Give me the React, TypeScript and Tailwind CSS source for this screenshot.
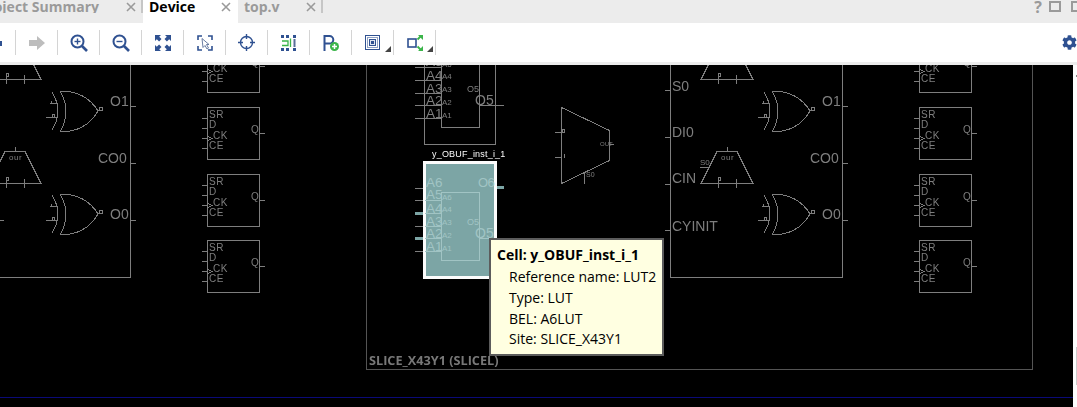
import { FaCog } from "react-icons/fa";

const blue = "#2f5191";
const wire = "#808080";

function CloseX() {
	return (
		<svg width="10" height="10" viewBox="0 0 10 10" className="shrink-0">
			<path d="M1 1L9 9M9 1L1 9" stroke="#9a9a9a" strokeWidth="1.6" />
		</svg>
	);
}

function ZoomIcon({ plus }: { plus?: boolean }) {
	return (
		<svg width="18" height="18" viewBox="0 0 18 18">
			<circle cx="7.5" cy="7.5" r="6" fill="none" stroke={blue} strokeWidth="2" />
			<path d="M12 12L17 17" stroke={blue} strokeWidth="2.6" />
			<path d="M4.5 7.5H10.5" stroke={blue} strokeWidth="1.4" />
			{plus && <path d="M7.5 4.5V10.5" stroke={blue} strokeWidth="1.4" />}
		</svg>
	);
}

function FitIcon() {
	return (
		<svg width="16" height="16" viewBox="0 0 16 16" fill={blue}>
			<path d="M0 0H6L4.2 1.8L6.5 4.1L4.1 6.5L1.8 4.2L0 6Z" />
			<path d="M16 0H10L11.8 1.8L9.5 4.1L11.9 6.5L14.2 4.2L16 6Z" />
			<path d="M0 16H6L4.2 14.2L6.5 11.9L4.1 9.5L1.8 11.8L0 10Z" />
			<path d="M16 16H10L11.8 14.2L9.5 11.9L11.9 9.5L14.2 11.8L16 10Z" />
		</svg>
	);
}

function SelectIcon() {
	return (
		<svg width="16" height="16" viewBox="0 0 16 16" fill="none">
			<path d="M1 5V1H5M11 1H15V5M15 11V15H11M5 15H1V11" stroke={blue} strokeWidth="1.6" />
			<path d="M5 3.5L12 9.5H9.5L11.5 13L10 14L8 10.5L6 12.5Z" fill="#fff" stroke="#5a6f99" strokeWidth="0.9" />
		</svg>
	);
}

function TargetIcon() {
	return (
		<svg width="17" height="17" viewBox="0 0 17 17" fill="none" stroke={blue}>
			<circle cx="8.5" cy="8.5" r="6" strokeWidth="1.4" />
			<path d="M8.5 0V5M8.5 12V17M0 8.5H5M12 8.5H17" strokeWidth="1.4" />
		</svg>
	);
}

function RouteIcon() {
	return (
		<svg width="15" height="16" viewBox="0 0 15 16">
			<g fill={blue}>
				<rect x="0" y="0" width="3" height="3" />
				<rect x="5" y="0" width="3" height="3" />
				<rect x="12" y="0" width="3" height="3" />
				<rect x="0" y="13" width="3" height="3" />
				<rect x="5" y="13" width="3" height="3" />
				<rect x="12" y="13" width="3" height="3" />
			</g>
			<rect x="12.5" y="4" width="2" height="8" fill="#5a6f99" />
			<path d="M1 6H7V10.5H1M9.5 3.5V12" fill="none" stroke="#3bb54a" strokeWidth="1.3" />
		</svg>
	);
}

function PlusPIcon() {
	return (
		<svg width="16" height="16" viewBox="0 0 16 16">
			<path d="M1.5 16V1H6.5A3.8 3.8 0 0 1 6.5 8.6H1.5" fill="none" stroke={blue} strokeWidth="2" />
			<circle cx="11.5" cy="11.5" r="4.5" fill="#3bb54a" />
			<path d="M9 11.5H14M11.5 9V14" stroke="#fff" strokeWidth="1.5" />
		</svg>
	);
}

function CornerMark() {
	return <span className="absolute right-[2px] bottom-[3px] h-0 w-0 border-b-[6px] border-l-[6px] border-b-[#444444] border-l-transparent" />;
}

function SquaresIcon() {
	return (
		<svg width="15" height="15" viewBox="0 0 15 15" fill="none">
			<rect x="0.5" y="0.5" width="14" height="14" stroke={blue} />
			<rect x="2.5" y="2.5" width="10" height="10" stroke="#8ea1c4" />
			<rect x="4.5" y="4.5" width="6" height="6" stroke={blue} fill="#dfe5f0" />
			<rect x="6" y="6" width="3" height="3" fill={blue} />
		</svg>
	);
}

function ExpandIcon() {
	return (
		<svg width="16" height="16" viewBox="0 0 16 16" fill="none">
			<rect x="1" y="4" width="8" height="8" stroke={blue} strokeWidth="1.6" />
			<path d="M10.5 4.5L14 1M10.5 11.5L14 15" stroke="#3bb54a" strokeWidth="1.8" />
			<path d="M11 0H16V5ZM11 16H16V11Z" fill="#3bb54a" />
		</svg>
	);
}

function ToolButton({ children, corner }: { children?: React.ReactNode; corner?: boolean }) {
	return (
		<div className="relative flex h-[25px] w-[42px] shrink-0 items-center justify-center border-r border-[#d4d4d4]">
			{children}
			{corner && <CornerMark />}
		</div>
	);
}

function T({ x, y, s = 10, ls = 0, children, fill = wire }: { x: number; y: number; s?: number; ls?: number; children: React.ReactNode; fill?: string }) {
	return (
		<text x={x} y={y} fontSize={s} letterSpacing={ls} fill={fill}>
			{children}
		</text>
	);
}

function Ff({ x, y }: { x: number; y: number }) {
	return (
		<g transform={`translate(${x} ${y})`}>
			<rect x="0.5" y="0.5" width="52" height="52" fill="none" stroke={wire} />
			<path d="M-5 11.5H0M-5 21.5H0M-5 31.5H0M-5 41.5H0M52 26.5H58M0 29L5 31.5L0 34" fill="none" stroke={wire} />
			<T x={2} y={11} ls={0.5}>SR</T>
			<T x={2} y={21}>D</T>
			<T x={6} y={32} ls={0.5}>CK</T>
			<T x={2} y={42} ls={0.5}>CE</T>
			<T x={44} y={26}>Q</T>
		</g>
	);
}

function Xor({ x, y }: { x: number; y: number }) {
	return (
		<g transform={`translate(${x} ${y})`} fill="none" stroke={wire}>
			<path d="M0 0.5Q12 19 0 38" />
			<path d="M8 -1Q20 19 8 40" />
			<path d="M8 -1Q34 -1 46 19Q34 40 8 40" />
			<path d="M46 18.5H51M-2 11.5H6M-6 25.5H6" />
			<rect x="47.5" y="15.5" width="3" height="3" />
			<rect x="0.5" y="22.5" width="2" height="3" />
			<path d="M-1 8.5V11" />
		</g>
	);
}

function Mux({ x, y, top }: { x: number; y: number; top?: boolean }) {
	return (
		<g transform={`translate(${x} ${y})`} fill="none" stroke={wire}>
			<path d="M16 0.5H36L52 32.5H0Z" />
			<path d="M26 -4V0M17 28V37M35 28V37" />
			<rect x="17.5" y="26.5" width="2" height="3" />
			{!top && (
				<text x="20" y="9" fontSize="8" letterSpacing="0.5" stroke="none" fill={wire}>
					our
				</text>
			)}
		</g>
	);
}

function Slice({ dx, inputs }: { dx: number; inputs?: boolean }) {
	return (
		<g transform={`translate(${dx} 0)`}>
			<path d="M670.5 60V277.5H842.5V60" fill="none" stroke={wire} />
			<path d="M665 90.5H670M665 137.5H670M665 184.5H670M665 230.5H670M842 106.5H848M842 163.5H848M842 220.5H848" stroke={wire} />
			{inputs && (
				<>
					<T x={672} y={91} s={14}>S0</T>
					<T x={672} y={137} s={14}>DI0</T>
					<T x={672} y={183} s={14}>CIN</T>
					<T x={672} y={231} s={14}>CYINIT</T>
					<T x={700} y={165} s={8}>S0</T>
					<path d="M700 167.5H709" stroke={wire} />
				</>
			)}
			<T x={822} y={106} s={14}>O1</T>
			<T x={810} y={163} s={14}>CO0</T>
			<T x={822} y={219} s={14}>O0</T>
			<Mux x={701} y={47} top />
			<Mux x={701} y={151} />
			<Xor x={764} y={92} />
			<Xor x={764} y={195} />
		</g>
	);
}

const bigPins: [string, number][] = [["A6", 25], ["A5", 37], ["A4", 51], ["A3", 64], ["A2", 76], ["A1", 89]];
const smallPins: [string, number][] = [["A6", 38], ["A4", 50], ["A3", 63], ["A2", 76], ["A1", 89]];

function Lut({ y, selected }: { y: number; selected?: boolean }) {
	const c = selected ? "#a3c7c7" : wire;
	const x0 = selected ? 425 : 415;
	return (
		<g transform={`translate(0 ${y})`}>
			<rect
				x="424.5"
				y="0.5"
				width="71"
				height="115"
				fill={selected ? "#7ea7a7" : "none"}
				stroke={selected ? "#ffffff" : wire}
				strokeWidth={selected ? 3 : 1}
			/>
			{selected && <path d="M415 26.5H423M415 38.5H423M415 64.5H423M415 89.5H423" stroke={wire} />}
			{selected && <path d="M415 51.5H423M415 76.5H423M497 25.5H504" stroke="#7ea7a7" strokeWidth="3" />}
			<rect x="441.5" y="30.5" width="38" height="68" fill="none" stroke={c} />
			<path d={`M${x0} 38.5H441M${x0} 51.5H441M${x0} 64.5H441M${x0} 76.5H441M${x0} 89.5H441`} stroke={c} />
			{bigPins.map(([name, base]) => (
				<T key={name} x={426} y={base} s={13.5} fill={c}>{name}</T>
			))}
			{smallPins.map(([name, base]) => (
				<T key={name} x={442} y={base} s={8} fill={c}>{name}</T>
			))}
			<T x={467} y={63} s={9} fill={c}>O5</T>
			<T x={475} y={76} s={14} fill={c}>O5</T>
			<T x={478} y={25} s={13} ls={-0.5} fill={c}>O6</T>
			<path d={`M479 76.5H${selected ? 495 : 504}`} stroke={c} />
		</g>
	);
}

function Schematic() {
	return (
		<svg
			viewBox="0 65 1073 342"
			width="1073"
			height="342"
			shapeRendering="crispEdges"
			className="absolute top-0 left-0 font-['Liberation_Sans',sans-serif] opacity-[0.99]"
		>
			<Slice dx={-712} />
			<Slice dx={0} inputs />
			<path d="M0 220.5H4" stroke={wire} />
			<path d="M366.5 60V369.5H1032.5V60" fill="none" stroke="#555555" />
			<text x="369" y="365" fontSize="12.7" fontWeight="700" fill="#7a7a7a" className="font-['Open_Sans',sans-serif]">
				SLICE_X43Y1 (SLICEL)
			</text>
			<path d="M0 397.5H1073" stroke="#0b0b7a" />
			{[40, 107, 174, 240].map((y) => (
				<g key={y}>
					<Ff x={207} y={y} />
					<Ff x={919} y={y} />
				</g>
			))}
			<Lut y={29} />
			<Lut y={162} selected />
			<text x="432" y="157" fontSize="9" letterSpacing="0.2" fill="#ffffff">
				y_OBUF_inst_i_1
			</text>
			<g fill="none" stroke={wire}>
				<path d="M561.5 107.5L609.5 130.5V160.5L561.5 183.5Z" />
				<path d="M555 132.5H561M555 157.5H561M584.5 172V184M609 144.5H614" />
				<rect x="562.5" y="129.5" width="2" height="3" />
				<path d="M564.5 154V158" />
			</g>
			<T x={600} y={146} s={6}>OUT</T>
			<T x={586} y={177} s={7}>S0</T>
		</svg>
	);
}

export default function App() {
	return (
		<div className="flex h-screen w-full flex-col overflow-hidden bg-white font-['Open_Sans',sans-serif]">
			{/* tabs */}
			<div className="flex h-[23px] shrink-0 bg-[#ececec] pb-[10px] text-[14px] font-bold">
				<div className="flex w-[143px] shrink-0 items-center justify-end overflow-hidden border-r-2 border-[#c6c6c6] text-[#9a9a9a]">
					<span className="whitespace-nowrap">Project Summary</span>
					<span className="mr-[5px] ml-[27px] shrink-0">
						<CloseX />
					</span>
				</div>
				<div className="mb-[-10px] flex w-[95px] shrink-0 items-start bg-white pl-[6px] text-black">
					<span className="flex h-[13px] items-center">Device</span>
					<span className="ml-[26px] flex h-[13px] items-center">
						<CloseX />
					</span>
				</div>
				<div className="flex w-[85px] shrink-0 items-center border-r-2 border-[#c6c6c6] pl-[6px] text-[#9a9a9a]">
					<span>top.v</span>
					<span className="ml-[26px]">
						<CloseX />
					</span>
				</div>
				<div className="ml-auto flex items-center">
					<span className="text-[16px] leading-none text-[#9a9a9a]">?</span>
					<span className="ml-[7px] h-[11px] w-[12px] border-2 border-[#9a9a9a]" />
					<span className="mr-[-6px] ml-[10px] h-[11px] w-[12px] border-2 border-[#9a9a9a]" />
				</div>
			</div>
			{/* toolbar */}
			<div className="flex h-[39px] shrink-0 items-center bg-white">
				<div className="relative h-[25px] w-[16px] shrink-0 border-r border-[#d4d4d4]">
					<span className="absolute top-[11px] left-0 h-[5px] w-[2px] bg-[#2f5191]" />
				</div>
				<ToolButton>
					<svg width="16" height="14" viewBox="0 0 16 14">
						<path d="M0 4H8V0L16 7L8 14V10H0Z" fill="#bdbdbd" />
					</svg>
				</ToolButton>
				<ToolButton><ZoomIcon plus /></ToolButton>
				<ToolButton><ZoomIcon /></ToolButton>
				<ToolButton><FitIcon /></ToolButton>
				<ToolButton><SelectIcon /></ToolButton>
				<ToolButton><TargetIcon /></ToolButton>
				<ToolButton><RouteIcon /></ToolButton>
				<ToolButton><PlusPIcon /></ToolButton>
				<ToolButton corner><SquaresIcon /></ToolButton>
				<ToolButton corner><ExpandIcon /></ToolButton>
				<FaCog className="ml-auto text-[15px] text-[#2f5191]" />
			</div>
			<div className="h-[3px] shrink-0 bg-[#ececec]" />
			{/* device canvas */}
			<div className="flex min-h-0 flex-1">
				<div className="relative flex-1 overflow-hidden bg-black">
					<Schematic />
					<div className="absolute top-[173px] left-[489px] h-[118px] w-[175px] border-2 border-[#5c5c5c] bg-[#ffffe1] pt-[5px] pl-[6px] text-[14px] leading-[20.7px] text-black">
						<p className="font-bold">Cell: y_OBUF_inst_i_1</p>
						<div className="mt-[1.5px] pl-[12px]">
							<p>Reference name: LUT2</p>
							<p>Type: LUT</p>
							<p>BEL: A6LUT</p>
							<p>Site: SLICE_X43Y1</p>
						</div>
					</div>
				</div>
				<div className="relative w-[4px] shrink-0 bg-[#fdfdfd]">
					<span className="absolute top-[10px] right-0 h-[2px] w-[1px] bg-[#888888]" />
					<span className="absolute top-[282px] right-0 h-[38px] w-[1px] bg-[#cccccc]" />
				</div>
			</div>
		</div>
	);
}
